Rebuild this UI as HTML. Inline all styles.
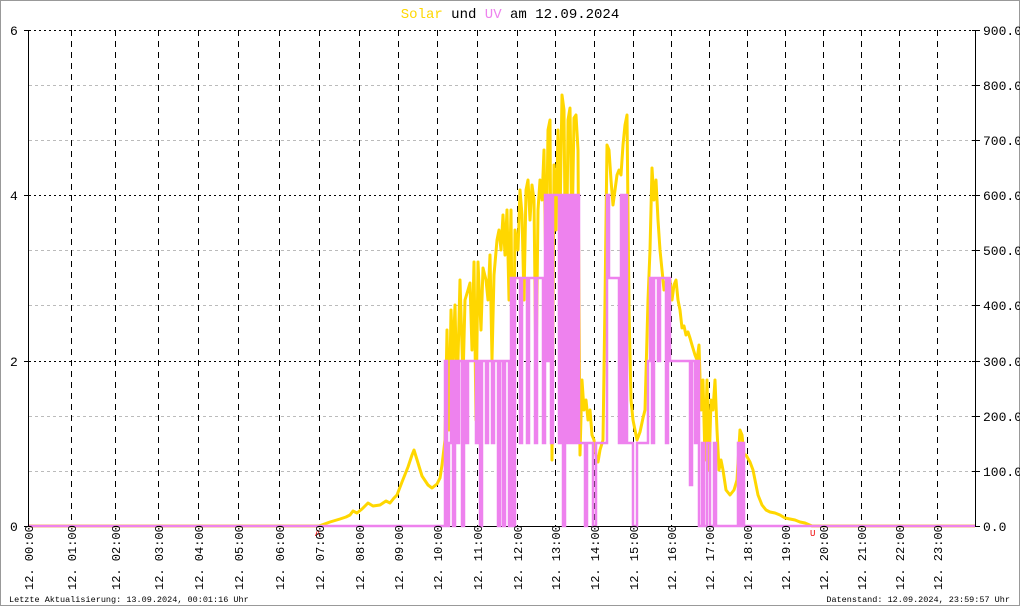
<!DOCTYPE html>
<html><head><meta charset="utf-8"><style>
html,body{margin:0;padding:0;background:#fff}
svg{display:block}
text{font-family:"Liberation Mono","DejaVu Sans Mono",monospace}
</style></head><body>
<svg width="1020" height="606" viewBox="0 0 1020 606" xmlns="http://www.w3.org/2000/svg">
<rect x="0.5" y="0.5" width="1019" height="605" fill="#fff" stroke="#999"/>
<text x="510" y="18" font-size="14" text-anchor="middle"><tspan fill="#ffd700">Solar</tspan> und <tspan fill="#ee82ee">UV</tspan> am 12.09.2024</text>
<!-- gray horizontal grid -->
<g stroke="#bbb" stroke-dasharray="3,3" stroke-width="1">
<line x1="29" y1="85.5" x2="975" y2="85.5"/><line x1="29" y1="140.5" x2="975" y2="140.5"/>
<line x1="29" y1="250.5" x2="975" y2="250.5"/><line x1="29" y1="305.5" x2="975" y2="305.5"/>
<line x1="29" y1="416.5" x2="975" y2="416.5"/><line x1="29" y1="471.5" x2="975" y2="471.5"/>
</g>
<g stroke="#000" stroke-dasharray="2,3" stroke-width="1">
<line x1="29" y1="30.5" x2="975" y2="30.5"/><line x1="29" y1="195.5" x2="975" y2="195.5"/><line x1="29" y1="361.5" x2="975" y2="361.5"/>
</g>
<g stroke="#000" stroke-dasharray="6,5" stroke-width="1">
<line x1="71.5" y1="30" x2="71.5" y2="526"/><line x1="115.5" y1="30" x2="115.5" y2="526"/>
<line x1="158.5" y1="30" x2="158.5" y2="526"/><line x1="198.5" y1="30" x2="198.5" y2="526"/>
<line x1="238.5" y1="30" x2="238.5" y2="526"/><line x1="279.5" y1="30" x2="279.5" y2="526"/>
<line x1="319.5" y1="30" x2="319.5" y2="526"/><line x1="359.5" y1="30" x2="359.5" y2="526"/>
<line x1="398.5" y1="30" x2="398.5" y2="526"/><line x1="437.5" y1="30" x2="437.5" y2="526"/>
<line x1="477.5" y1="30" x2="477.5" y2="526"/><line x1="517.5" y1="30" x2="517.5" y2="526"/>
<line x1="555.5" y1="30" x2="555.5" y2="526"/><line x1="594.5" y1="30" x2="594.5" y2="526"/>
<line x1="633.5" y1="30" x2="633.5" y2="526"/><line x1="671.5" y1="30" x2="671.5" y2="526"/>
<line x1="709.5" y1="30" x2="709.5" y2="526"/><line x1="747.5" y1="30" x2="747.5" y2="526"/>
<line x1="785.5" y1="30" x2="785.5" y2="526"/><line x1="823.5" y1="30" x2="823.5" y2="526"/>
<line x1="861.5" y1="30" x2="861.5" y2="526"/><line x1="899.5" y1="30" x2="899.5" y2="526"/>
<line x1="937.5" y1="30" x2="937.5" y2="526"/>
</g>
<!-- axes -->
<g stroke="#000" stroke-width="1">
<line x1="28.5" y1="30" x2="28.5" y2="527"/>
<line x1="975.5" y1="30" x2="975.5" y2="527"/>
<line x1="29" y1="526.5" x2="975" y2="526.5"/>
<line x1="24" y1="30.5" x2="29" y2="30.5"/><line x1="24" y1="195.5" x2="29" y2="195.5"/>
<line x1="24" y1="361.5" x2="29" y2="361.5"/><line x1="24" y1="526.5" x2="29" y2="526.5"/>
<line x1="972" y1="30.5" x2="980" y2="30.5"/><line x1="972" y1="85.5" x2="980" y2="85.5"/>
<line x1="972" y1="140.5" x2="980" y2="140.5"/><line x1="972" y1="195.5" x2="980" y2="195.5"/>
<line x1="972" y1="250.5" x2="980" y2="250.5"/><line x1="972" y1="305.5" x2="980" y2="305.5"/>
<line x1="972" y1="361.5" x2="980" y2="361.5"/><line x1="972" y1="416.5" x2="980" y2="416.5"/>
<line x1="972" y1="471.5" x2="980" y2="471.5"/><line x1="972" y1="526.5" x2="980" y2="526.5"/>
</g>
<g font-size="13" fill="#000">
<text x="10" y="35">6</text><text x="10" y="200">4</text><text x="10" y="366">2</text><text x="10" y="531">0</text>
</g>
<g font-size="13" fill="#000">
<text x="983" y="35">900.0</text><text x="983" y="90">800.0</text><text x="983" y="145">700.0</text>
<text x="983" y="200">600.0</text><text x="983" y="255">500.0</text><text x="983" y="310">400.0</text>
<text x="983" y="366">300.0</text><text x="983" y="421">200.0</text><text x="983" y="476">100.0</text>
<text x="983" y="531">0.0</text>
</g>
<!-- solar -->
<polyline fill="none" stroke="#ffd700" stroke-width="3" stroke-linejoin="round" points="
29,526 319,526 330,522 340,519 346,517 350,515 353,511 357,513 362,509 368,503 373,506 380,505 386,501 390,503 394,498 397,495 402,482 408,467 412,455 414,450 418,463 422,476 428,485 432,488 437,484 440,478 442,465 445,440 447,330 449,430 451,310 453,360 455,305 457,400 460,280 463,380 465,300 468,290 470,283 472,350 474,262 476,420 478,262 481,330 483,268 486,280 488,300 490,255 492,360 494,275 497,240 499,230 501,250 503,215 505,255 507,210 509,300 511,210 513,440 515,230 518,250 520,190 522,215 524,300 526,190 528,180 530,220 532,185 534,200 536,380 538,210 540,180 542,200 544,150 546,280 548,130 550,120 552,460 554,165 556,230 558,130 560,220 562,95 564,110 566,320 568,120 570,108 572,240 574,118 576,115 578,150 580,455 582,380 584,410 586,400 588,420 590,410 592,435 594,440 596,455 598,462 600,450 603,440 605,300 607,145 609,150 611,180 613,205 615,190 617,175 619,170 621,175 623,145 625,125 627,115 629,310 631,400 633,420 635,430 637,440 640,432 643,418 645,410 648,300 650,250 652,168 654,200 656,180 658,220 660,250 662,270 664,290 666,282 668,300 670,280 672,300 674,285 676,280 678,300 680,310 682,328 684,326 686,335 688,332 690,338 692,345 695,355 697,360 699,345 701,410 703,380 705,460 707,380 709,470 711,400 713,410 715,380 717,430 719,470 721,460 723,470 726,490 730,495 734,490 737,480 740,430 742,435 744,455 746,455 750,462 753,470 755,480 758,495 762,505 766,510 770,512 775,513 780,515 785,518 790,519 795,520 800,522 805,523 812,526 975,526"/>
<!-- UV -->
<polyline fill="none" stroke="#ee82ee" stroke-width="2.5" points="
29,526 445,526 445,361 447,361 447,526 449,526 449,443 451,443 451,361 453,361 453,526 455,526 455,361 457,361 457,443 459,443 459,361 462,361 462,526 464,526 464,361 466,361 466,443 468,443 468,361 476,361 476,443 478,443 478,361 480,361 480,526 482,526 482,361 486,361 486,443 488,443 488,361 492,361 492,443 494,443 494,361 498,361 498,526 500,526 500,361 503,361 503,526 505,526 505,361 509,361 509,526 511,526 511,278 513,278 513,526 515,526 515,278 520,278 520,443 522,443 522,278 527,278 527,443 529,443 529,278 535,278 535,443 537,443 537,278 543,278 543,443 545,443 545,195 547,195 547,361 549,361 549,195 551,195 551,443 553,443 553,195 559,195 559,443 561,443 561,195 563,195 563,526 565,526 565,195 567,195 567,443 569,443 569,195 571,195 571,443 573,443 573,195 575,195 575,443 577,443 577,195 579,195 579,443 585,443 585,526 587,526 587,443 593,443 593,526 596,526 596,443 607,443 607,195 609,195 609,278 619,278 619,443 621,443 621,195 623,195 623,443 625,443 625,195 627,195 627,443 633,443 633,526 637,526 637,443 648,443 648,361 650,361 650,278 652,278 652,443 654,443 654,278 658,278 658,361 660,361 660,278 666,278 666,443 668,443 668,278 670,278 670,361 690,361 690,485 692,485 692,361 695,361 695,443 697,443 697,361 699,361 699,526 702,526 702,443 704,443 704,526 707,526 707,443 710,443 710,526 714,526 714,443 716,443 716,526 738,526 738,443 740,443 740,526 742,526 742,443 744,443 744,526 975,526"/>
<!-- red markers -->
<text x="315" y="536" font-size="9" fill="#e00">A</text>
<text x="810" y="536" font-size="9" fill="#e00">U</text>
<!-- x labels -->
<g font-size="12" fill="#000">
<text transform="translate(33,590) rotate(-90)">12. 00:00</text>
<text transform="translate(76,590) rotate(-90)">12. 01:00</text>
<text transform="translate(120,590) rotate(-90)">12. 02:00</text>
<text transform="translate(163,590) rotate(-90)">12. 03:00</text>
<text transform="translate(203,590) rotate(-90)">12. 04:00</text>
<text transform="translate(243,590) rotate(-90)">12. 05:00</text>
<text transform="translate(284,590) rotate(-90)">12. 06:00</text>
<text transform="translate(324,590) rotate(-90)">12. 07:00</text>
<text transform="translate(364,590) rotate(-90)">12. 08:00</text>
<text transform="translate(403,590) rotate(-90)">12. 09:00</text>
<text transform="translate(442,590) rotate(-90)">12. 10:00</text>
<text transform="translate(482,590) rotate(-90)">12. 11:00</text>
<text transform="translate(522,590) rotate(-90)">12. 12:00</text>
<text transform="translate(560,590) rotate(-90)">12. 13:00</text>
<text transform="translate(599,590) rotate(-90)">12. 14:00</text>
<text transform="translate(638,590) rotate(-90)">12. 15:00</text>
<text transform="translate(676,590) rotate(-90)">12. 16:00</text>
<text transform="translate(714,590) rotate(-90)">12. 17:00</text>
<text transform="translate(752,590) rotate(-90)">12. 18:00</text>
<text transform="translate(790,590) rotate(-90)">12. 19:00</text>
<text transform="translate(828,590) rotate(-90)">12. 20:00</text>
<text transform="translate(866,590) rotate(-90)">12. 21:00</text>
<text transform="translate(904,590) rotate(-90)">12. 22:00</text>
<text transform="translate(942,590) rotate(-90)">12. 23:00</text>
</g>
<text x="9" y="602" font-size="8.5" fill="#000">Letzte Aktualisierung: 13.09.2024, 00:01:16 Uhr</text>
<text x="1010" y="602" font-size="8.5" fill="#000" text-anchor="end">Datenstand: 12.09.2024, 23:59:57 Uhr</text>
</svg>
</body></html>
